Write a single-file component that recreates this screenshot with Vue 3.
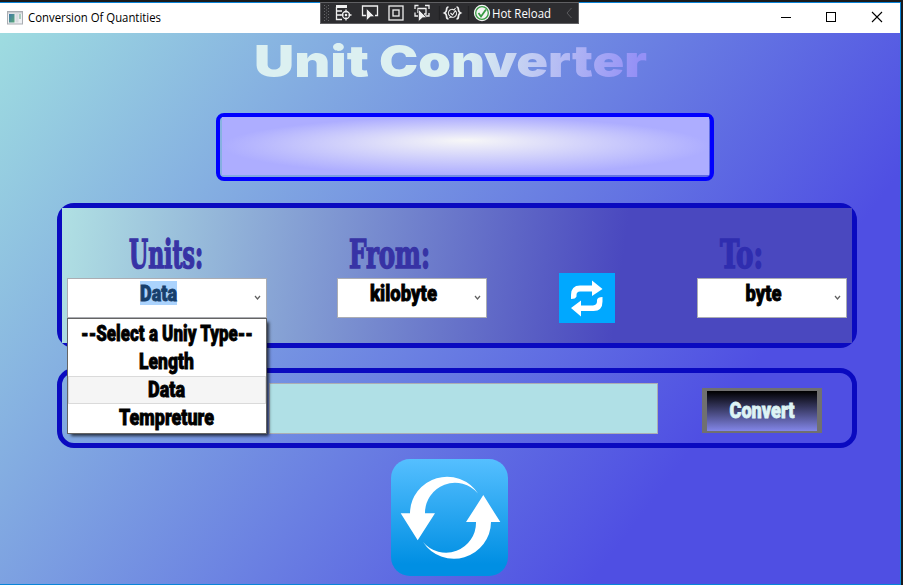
<script setup>
import { ref } from 'vue'

const options = [
  { label: '--Select a Uniy Type--', x: 13, w: 172 },
  { label: 'Length', x: 71, w: 55 },
  { label: 'Data', x: 80, w: 37 },
  { label: 'Tempreture', x: 51, w: 95 },
]
const selected = ref('Data')
const open = ref(true)
</script>

<template>
  <div class="screen">
    <div class="window">
      <header class="titlebar">
        <svg class="app-icon" width="16" height="14" viewBox="0 0 16 14">
          <defs>
            <linearGradient id="app-pane-fill" x1="0" y1="0" x2="1" y2="1">
              <stop offset="0" stop-color="#3f79a8" /><stop offset="1" stop-color="#5aa777" />
            </linearGradient>
          </defs>
          <rect x=".5" y=".5" width="15" height="12.5" fill="#eef0f3" stroke="#a9adb2" />
          <rect x="1" y="1" width="14" height="1.5" fill="#c9ccd1" />
          <rect x="2" y="3" width="5.5" height="8.5" fill="url(#app-pane-fill)" />
          <rect x="8.5" y="3" width="3" height="8.5" fill="#d9dce1" />
          <rect x="12" y="3" width="2" height="5" fill="#a9cdbd" />
        </svg>
        <svg class="caption" width="150" height="30">
          <text x="0" y="19" textLength="133" lengthAdjust="spacingAndGlyphs">Conversion Of Quantities</text>
        </svg>
        <svg class="controls" width="120" height="30" viewBox="0 0 120 30" fill="none" stroke="#000">
          <path d="M1 14.500h10" />
          <rect x="46.500" y="9.500" width="9" height="9" />
          <path d="M92 9l10 10M102 9l-10 10" stroke-width="1.100" />
        </svg>
      </header>

      <main class="content">
        <svg class="heading" width="400" height="60">
          <defs>
            <linearGradient id="head" gradientUnits="userSpaceOnUse" x1="215" y1="0" x2="385" y2="24">
              <stop offset="0" stop-color="#dcf0f1" /><stop offset="1" stop-color="#9490f6" />
            </linearGradient>
          </defs>
          <text x="0" y="44" textLength="115" lengthAdjust="spacingAndGlyphs">Unit</text>
          <text x="125" y="44" textLength="268" lengthAdjust="spacingAndGlyphs">Converter</text>
        </svg>

        <section class="display">
          <svg width="487" height="58">
            <defs>
              <radialGradient id="glow" cx=".5" cy=".5" r=".5" fx=".5" fy=".4">
                <stop offset="0" stop-color="#f7f7f7" /><stop offset="1" stop-color="#adadff" />
              </radialGradient>
            </defs>
            <rect width="487" height="58" fill="url(#glow)" />
          </svg>
        </section>

        <section class="panel units">
          <div class="group wide">
            <svg class="label" width="200" height="70">
              <text x="62" y="60" textLength="74" lengthAdjust="spacingAndGlyphs">Units:</text>
            </svg>
            <div class="combo" @click="open = !open">
              <svg class="value" width="198" height="38">
                <rect x="72" y="2" width="37" height="24" fill="#abd3fd" />
                <text class="picked" x="72" y="22" textLength="37" lengthAdjust="spacingAndGlyphs">{{ selected }}</text>
                <path class="chevron" d="M187 17l2.500 3 2.500-3" />
              </svg>
              <ul v-if="open" class="dropdown">
                <li v-for="o in options" :key="o.label" :class="{ active: o.label === selected }" @click.stop="selected = o.label">
                  <svg width="198" height="28">
                    <text :x="o.x" y="21" :textLength="o.w" lengthAdjust="spacingAndGlyphs">{{ o.label }}</text>
                  </svg>
                </li>
              </ul>
            </div>
          </div>
          <div class="group from">
            <svg class="label" width="150" height="70">
              <text x="12" y="60" textLength="81" lengthAdjust="spacingAndGlyphs">From:</text>
            </svg>
            <div class="combo">
              <svg class="value" width="148" height="38">
                <text x="32" y="22" textLength="67" lengthAdjust="spacingAndGlyphs">kilobyte</text>
                <path class="chevron" d="M137 17l2.500 3 2.500-3" />
              </svg>
            </div>
          </div>
          <button class="swap">
            <svg width="56" height="50" viewBox="0 0 56 50" fill="#fff">
              <path d="M12 26v-4q0-9.500 9-9.500h12V7.500l10.500 8.500L33 23v-4.500H21q-3.500 0-3.500 3.500v1.500q-1 2.500-5.500 2.500z" />
              <path d="M43.500 24v4.500q0 9.500-9 9.500H22v5.500L12 35l10-7.500V32.500h12q4-.500 4-4V27q.500-3 5.500-3z" />
            </svg>
          </button>
          <div class="group to">
            <svg class="label dim" width="150" height="70">
              <text x="23" y="60" textLength="43" lengthAdjust="spacingAndGlyphs">To:</text>
            </svg>
            <div class="combo">
              <svg class="value" width="148" height="38">
                <text x="47.500" y="22" textLength="36" lengthAdjust="spacingAndGlyphs">byte</text>
                <path class="chevron" d="M137 17l2.500 3 2.500-3" />
              </svg>
            </div>
          </div>
        </section>

        <section class="panel entry">
          <div class="input"></div>
          <button class="convert">
            <svg width="110" height="40">
              <text x="22.500" y="27" textLength="65" lengthAdjust="spacingAndGlyphs">Convert</text>
            </svg>
          </button>
        </section>

        <button class="refresh">
          <svg width="117" height="117" viewBox="0 0 117 117" fill="#fff">
            <path d="M87 34.500A37 37 0 0 0 19 54.300H9.700L26.700 81.300 44 54.300H34A30 30 0 0 1 87 34.500z" />
            <path transform="rotate(180 59.500 58.700)" d="M87 34.500A37 37 0 0 0 19 54.300H9.700L26.700 81.300 44 54.300H34A30 30 0 0 1 87 34.500z" />
          </svg>
        </button>
      </main>
    </div>

    <div class="debugbar">
      <svg width="257" height="20" viewBox="0 0 257 20" fill="none" stroke="#f0f0f0" stroke-width="1.300">
        <path d="M3.500 2v17M7.500 2v17" stroke="#68686b" stroke-width="1" stroke-dasharray="1 2" />
        <path d="M5.500 3.500v15" stroke="#68686b" stroke-width="1" stroke-dasharray="1 2" />
        <path d="M15 3.500h11" stroke-width="3" />
        <path d="M15.500 4v12.500H21M16 8h5M16 12h4" />
        <circle cx="25" cy="12" r="3.500" /><circle cx="25" cy="12" r=".6" />
        <path d="M25 6.500v3M25 14.500v3M19.500 12h3M27.500 12h3" />
        <path d="M45 12.500h-3.500V3h15v9.500H54" />
        <path d="M45.500 5.500l8 8-4 .3-4 3.700z" fill="#f0f0f0" stroke="#2d2d30" stroke-width=".6" />
        <rect x="68" y="3" width="14" height="14" /><rect x="72" y="7" width="6" height="6" />
        <path d="M94 6V2.500h3.500M104 2.500h4V6M108 10v3h-4M94 9.500V13h3M97 10V5.500h8V11h-2" />
        <path d="M97.500 6.500l8 8-4 .3-4 3.700z" fill="#f0f0f0" stroke="#2d2d30" stroke-width=".6" />
        <path d="M118.500 3v14M147.500 3v14" stroke="#222225" />
        <path d="M127.500 4q-2 0-2 3 0 2-2 3 2 1 2 3 0 3 2 3M135.500 4q2 0 2 3 0 2 2 3-2 1-2 3 0 3-2 3" stroke-width="1.700" />
        <path d="M129 13a3.600 3.600 0 0 1 4-6l1.500-2M134 7.500a3.600 3.600 0 0 1-4.500 6l-1 1.500M129.500 10l2 2 3-4.500" stroke-width="1.100" />
        <circle cx="161" cy="10" r="7.500" fill="#f4f4f4" stroke="#f4f4f4" />
        <circle cx="161" cy="10" r="6.300" stroke="#389b43" stroke-width="1.300" />
        <path d="M157.500 10l2.500 3.500 5-7" stroke="#389b43" stroke-width="1.800" />
        <text x="171" y="14.500" textLength="59" lengthAdjust="spacingAndGlyphs">Hot Reload</text>
        <path d="M250.500 5l-4.500 5 4.500 5" stroke="#59595c" stroke-width="1" />
      </svg>
    </div>
  </div>
</template>

<style>
body { margin: 0; overflow: hidden; }
</style>

<style scoped>
* { box-sizing: border-box; }
svg { display: block; flex: none; overflow: visible; }
button { padding: 0; border: 0; display: block; }

.screen {
  position: relative;
  width: 903px;
  height: 585px;
  padding: 2px 2px 0 0;
  background: #1b1b1c;
}
.window {
  height: 583px;
  border: 1px solid #0a84d8;
  border-left: 0;
  display: flex;
  flex-direction: column;
}
.titlebar {
  height: 30px;
  flex: none;
  background: #fff;
  display: flex;
  align-items: center;
  padding-left: 7px;
}
.caption { margin-left: 5px; }
.caption text { font: 12px "Open Sans", sans-serif; fill: #000; }
.controls { margin-left: auto; }

.content {
  flex: 1;
  min-height: 0;
  display: flex;
  flex-direction: column;
  background: linear-gradient(127deg, #9edce0, #4f4fe3 803px);
}
.heading { margin-left: 254px; }
.heading text {
  font: 900 44px Inter, sans-serif;
  fill: url(#head);
}

.display {
  width: 498px;
  height: 68px;
  margin: 20px 0 0 216px;
  border: 4px solid #00f;
  border-radius: 8px;
  padding-left: 2px;
}

.panel {
  width: 800px;
  margin-left: 57px;
  border: 5px solid #0a0ac0;
  border-radius: 17px;
  display: flex;
  flex: none;
}
.units {
  position: relative;
  z-index: 1;
  height: 145px;
  margin-top: 22px;
  padding-left: 5px;
}
.units::before {
  content: "";
  position: absolute;
  z-index: -1;
  inset: 0;
  background: linear-gradient(97.500deg, #b0e0e3, #4a48bf 563px);
}
.group { width: 150px; }
.group.wide { width: 200px; }
.from { margin-left: 70px; }
.swap { width: 56px; height: 50px; margin: 65px 0 0 72px; background: #00a8ff; }
.to { margin-left: 82px; }

.label text {
  font: bold 39px "DejaVu Serif Condensed", "DejaVu Serif", serif;
  fill: #3733a5;
  stroke: #3733a5;
  stroke-width: 1.500px;
}
.label.dim text { fill: #2f2daf; stroke: #2f2daf; }

.combo {
  position: relative;
  height: 40px;
  background: #fff;
  border: 1px solid #abadb3;
}
.combo text, .convert text {
  font: 900 22px Roboto, sans-serif;
  fill: #000;
  stroke: #000;
  stroke-width: .8px;
}
.combo .picked { fill: #173f6c; stroke: #173f6c; }
.chevron { fill: none; stroke: #606060; stroke-width: 1.200; }

.dropdown {
  position: absolute;
  z-index: 2;
  top: 39px;
  left: -1px;
  width: 200px;
  height: 116px;
  margin: 0;
  padding: 1px 0;
  list-style: none;
  background: #fff;
  border: 1px solid #646464;
  box-shadow: 3px 3px 3px -1px rgba(0, 0, 0, .7);
}
.dropdown li { height: 28px; }
.dropdown .active { background: #f5f5f5; box-shadow: inset 0 0 0 1px #dadada; }

.entry { height: 80px; margin-top: 20px; padding-left: 207px; }
.input {
  width: 389px;
  height: 51px;
  margin-top: 10px;
  background: #b0e0e6;
  border: 1px solid #abadb3;
}
.convert {
  width: 120px;
  height: 45px;
  margin: 15px 0 0 44px;
  border: solid #707070;
  border-width: 3px 5px 2px;
  background: linear-gradient(#000, #8386e8) padding-box;
}
.convert text { fill: #ddf3f5; stroke: #ddf3f5; }

.refresh {
  width: 117px;
  height: 117px;
  flex: none;
  margin: 11px 0 0 391px;
  border-radius: 19px;
  background: linear-gradient(#55bfff, #008fe3 90%);
}

.debugbar {
  position: absolute;
  z-index: 3;
  left: 320px;
  top: 2px;
  width: 259px;
  height: 22px;
  background: #2d2d30;
  border: 1px solid #606063;
}
.debugbar text { font: 12px "Open Sans", sans-serif; fill: #fff; stroke: none; }
</style>
